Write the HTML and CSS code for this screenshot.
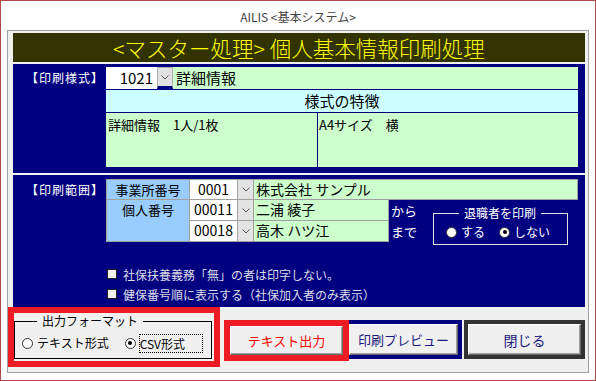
FILE: index.html
```html
<!DOCTYPE html>
<html lang="ja">
<head>
<meta charset="utf-8">
<title>AILIS</title>
<link rel="stylesheet" href="styles.css">
</head>
<body>
<div class="window">
  <div class="titlebar">AILIS &lt;基本システム&gt;</div>
  <div class="panel">
    <div class="header">&lt;マスター処理&gt; 個人基本情報印刷処理</div>

    <section class="sec sec1">
      <div class="sec-label l1">【印刷様式】</div>
      <div class="style-table">
        <div class="row1">
          <div class="combo-val">1021</div>
          <div class="dd dd-top"><svg width="8" height="5" viewBox="0 0 8 5"><path d="M0.5 0.5 L4 4 L7.5 0.5" fill="none" stroke="#555" stroke-width="1"/></svg></div>
          <div class="field-green">詳細情報</div>
        </div>
        <div class="caption">様式の特徴</div>
        <div class="desc">
          <div class="c1">詳細情報　1人/1枚</div>
          <div class="c2">A4サイズ　横</div>
        </div>
      </div>
    </section>

    <section class="sec sec2">
      <div class="sec-label l2">【印刷範囲】</div>
      <div class="range">
        <div class="rgrid">
          <div class="cell lab bt bl r1">事業所番号</div>
          <div class="cell code bt">0001</div>
          <div class="cell dd2 bt"><svg width="8" height="5" viewBox="0 0 8 5"><path d="M0.5 0.5 L4 4 L7.5 0.5" fill="none" stroke="#555" stroke-width="1"/></svg></div>
          <div class="cell name bt name-wide">株式会社 サンプル</div>

          <div class="cell lab bl lab2">個人番号</div>
          <div class="cell code r2">00011</div>
          <div class="cell dd2 r2"><svg width="8" height="5" viewBox="0 0 8 5"><path d="M0.5 0.5 L4 4 L7.5 0.5" fill="none" stroke="#555" stroke-width="1"/></svg></div>
          <div class="cell name r2">二浦 綾子</div>
          <div class="kara r2">から</div>

          <div class="cell code r3">00018</div>
          <div class="cell dd2 r3"><svg width="8" height="5" viewBox="0 0 8 5"><path d="M0.5 0.5 L4 4 L7.5 0.5" fill="none" stroke="#555" stroke-width="1"/></svg></div>
          <div class="cell name r3">高木 ハツ江</div>
          <div class="kara r3">まで</div>

          <fieldset class="retire">
            <legend>退職者を印刷</legend>
            <div class="radios">
              <span class="radio"></span><span class="rlabel">する</span>
              <span class="radio on gap"><span class="dot"></span></span><span class="rlabel">しない</span>
            </div>
          </fieldset>
        </div>
        <div class="checks">
          <div class="check"><span class="box"></span><span>社保扶養義務「無」の者は印字しない。</span></div>
          <div class="check"><span class="box"></span><span>健保番号順に表示する（社保加入者のみ表示）</span></div>
        </div>
      </div>
    </section>

    <div class="bottom">
      <div class="hl-group">
        <fieldset class="fmt">
          <legend>出力フォーマット</legend>
          <div class="fmt-row">
            <span class="radio"></span><span class="rlabel">テキスト形式</span>
            <span class="radio on gap2"><span class="dot"></span></span><span class="focus">CSV形式</span>
          </div>
        </fieldset>
      </div>
      <div class="hl-btn"><button class="btn btn-red">テキスト出力</button></div>
      <div class="nv-btn"><button class="btn btn-navy">印刷プレビュー</button></div>
      <div class="dk-btn"><button class="btn btn-close">閉じる</button></div>
    </div>
  </div>
</div>
</body>
</html>
```

FILE: styles.css
```css
* { box-sizing: border-box; }
html, body { margin: 0; padding: 0; background: #fff; }
body {
  font-family: "Noto Sans CJK JP", "Noto Sans", sans-serif;
  font-size: 12px;
  color: #000;
}
.window {
  width: 596px;
  height: 381px;
  border: 1px solid #b04a4a;
  background: #fff;
  display: flex;
  flex-direction: column;
}
.titlebar {
  height: 29px;
  padding-top: 3px;
  line-height: 26px;
  text-align: center;
  color: #444;
  font-size: 12px;
}
.panel {
  margin-left: 6px;
  width: 582px;
  height: 343px;
  border: 1px solid #a0a0a0;
  background: #f0f0f0;
  padding: 2px 3px 0 5px;
  display: flex;
  flex-direction: column;
}
.header {
  height: 29px;
  flex: none;
  background: #333300;
  color: #ffff00;
  font-size: 21.5px;
  font-weight: 300;
  line-height: 29px;
  text-align: center;
  white-space: nowrap;
}
.sec {
  background: #000080;
  display: flex;
  margin-top: 2px;
  flex: none;
}
.sec1 { height: 109px; padding: 3px 7px 6px 0; }
.sec2 { height: 132px; padding: 4px 7px 3px 0; }
.sec-label {
  width: 93px;
  padding-left: 13px;
  color: #fff;
  font-size: 12px;
  letter-spacing: 1px;
  white-space: nowrap;
}
.l1 { line-height: 22px; }
.l2 { line-height: 21px; }

.style-table { width: 472px; display: flex; flex-direction: column; }
.row1 { display: flex; height: 22px; }
.combo-val {
  width: 51px;
  background: #fff;
  text-align: right;
  padding-right: 4px;
  font-size: 15px;
  line-height: 22px;
}
.dd {
  width: 16px;
  background: #e1e1e1;
  border: 1px solid #adadad;
  display: flex;
  align-items: center;
  justify-content: center;
}
.dd-top { border-bottom: 3px solid #000080; }
.field-green {
  flex: 1;
  background: #ccffcc;
  font-size: 15px;
  line-height: 22px;
  padding-left: 3px;
}
.caption {
  height: 24px;
  border-top: 1px solid #000080;
  border-bottom: 1px solid #000080;
  background: #ccffff;
  text-align: center;
  font-size: 15px;
  line-height: 22px;
}
.desc { height: 54px; display: flex; background: #ccffcc; }
.desc > div { font-size: 13px; line-height: 17px; padding-top: 3px; }
.desc .c1 { width: 212px; border-right: 1px solid #000080; padding-left: 2px; }
.desc .c2 { flex: 1; padding-left: 1px; }

.range { width: 472px; }
.rgrid {
  display: grid;
  grid-template-columns: 84px 48px 16px 135px 44px 1fr;
  grid-template-rows: 21px 21px 21px;
}
.cell {
  border-right: 1px solid #a0a0a0;
  border-bottom: 1px solid #a0a0a0;
}
.bt { border-top: 1px solid #a0a0a0; }
.bl { border-left: 1px solid #a0a0a0; }
.lab {
  background: #99ccff;
  text-align: center;
  font-size: 13px;
  line-height: 19px;
}
.lab2 { grid-column: 1; grid-row: 2 / 4; line-height: 20px; }
.code {
  background: #fff;
  text-align: center;
  font-size: 14px;
  line-height: 19px;
}
.dd2 {
  background: #e3e3e3;
  display: flex;
  align-items: center;
  justify-content: center;
}
.name {
  background: #ccffcc;
  font-size: 14px;
  line-height: 19px;
  padding-left: 2px;
}
.name-wide { grid-column: 4 / 7; }
.r2 { grid-row: 2; }
.r3 { grid-row: 3; }
.kara {
  grid-column: 5;
  color: #fff;
  font-size: 13px;
  line-height: 21px;
  padding-left: 2px;
}
.retire {
  grid-column: 6;
  grid-row: 2 / 4;
  align-self: start;
  margin: 6px 10px 0 0;
  padding: 2px 0 2px 12px;
  border: 1px solid #e0e0e0;
  height: 39px;
  min-width: 0;
}
.retire legend {
  color: #fff;
  font-size: 12px;
  line-height: 14px;
  padding: 0 5px;
  margin-left: 13px;
}
.radios, .fmt-row { display: flex; align-items: center; height: 20px; }
.radio {
  width: 11px;
  height: 11px;
  border-radius: 50%;
  border: 1px solid #333;
  background: #fff;
  display: inline-flex;
  align-items: center;
  justify-content: center;
  flex: none;
}
.radio .dot { width: 4px; height: 4px; border-radius: 50%; background: #000; }
.rlabel { margin-left: 4px; font-size: 12px; line-height: 16px; }
.retire .rlabel { color: #fff; }
.radio.gap { margin-left: 14px; }

.checks { margin-top: 22px; }
.check {
  display: flex;
  align-items: center;
  height: 20px;
  color: #dcdce8;
  font-size: 12px;
  padding-left: 1px;
}
.check .box {
  width: 10px;
  height: 10px;
  border: 1px solid #222;
  background: #f0f0f0;
  margin-right: 6px;
  flex: none;
}

.bottom {
  display: flex;
  align-items: flex-start;
  margin-left: -5px;
  margin-right: -3px;
  height: 65px;
  flex: none;
}
.hl-group {
  width: 212px;
  height: 60px;
  border: 6px solid #ed1c24;
  padding-top: 1px;
}
.fmt {
  width: 198px;
  margin: 0;
  padding: 3px 0 3px 7px;
  border: 1px solid #000;
  min-width: 0;
}
.fmt legend {
  font-size: 12px;
  line-height: 14px;
  padding: 0 5px;
  margin-left: 15px;
}
.fmt-row { height: 24px; }
.radio.gap2 { margin-left: 16px; }
.focus {
  margin-left: 3px;
  width: 64px;
  height: 19px;
  border: 1px dotted #000;
  font-size: 12px;
  line-height: 17px;
  padding-left: 0;
}
.hl-btn {
  margin-left: 4px;
  margin-top: 13px;
  width: 125px;
  height: 41px;
  border: 6px solid #ed1c24;
}
.nv-btn {
  margin-top: 13px;
  width: 113px;
  height: 39px;
  border: 4px solid #000080;
  border-left: 0;
}
.dk-btn {
  margin-left: 2px;
  margin-top: 13px;
  width: 121px;
  height: 39px;
  border: 4px solid #333;
}
.btn {
  display: block;
  width: 100%;
  height: 100%;
  margin: 0;
  padding: 0;
  background: #f0f0f0;
  border: 1px solid;
  border-color: #fff #696969 #696969 #fff;
  box-shadow: inset -1px -1px #a0a0a0;
  font-family: "Noto Sans CJK JP", "Noto Sans", sans-serif;
  font-size: 13px;
  line-height: 16px;
  text-align: center;
}
.btn-red { color: #ff0000; }
.btn-navy { color: #1a1a80; }
.btn-close { color: #1a1a80; font-size: 14px; }
```
